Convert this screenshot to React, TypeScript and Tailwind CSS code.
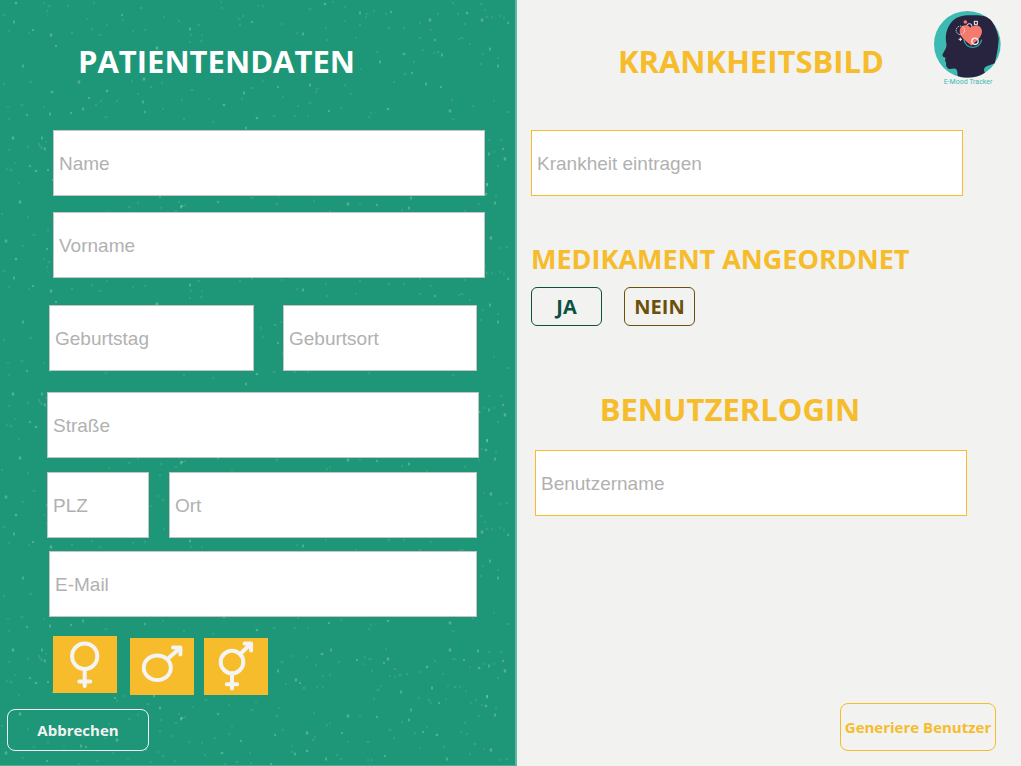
import React from "react";

type Speck = [number, number];

const brightSpecks: Speck[] = [
  [16, 3], [14, 22], [33, 30], [51, 35], [56, 46], [23, 66], [52, 92], [50, 114], [71, 113], [79, 82],
  [89, 98], [83, 109], [107, 91], [143, 102], [145, 112], [144, 79], [122, 15], [190, 29], [224, 105],
  [244, 93], [252, 22], [157, 48], [27, 115], [303, 34], [325, 4], [360, 13], [391, 12], [430, 20],
  [435, 40], [442, 55], [467, 13], [490, 49], [508, 23], [482, 20], [278, 87], [310, 85], [388, 109],
  [426, 84], [441, 87], [450, 111], [329, 111], [498, 66], [404, 54], [380, 62], [412, 73],
  [13, 138], [30, 166], [42, 138], [36, 171], [45, 149], [48, 170], [20, 202], [53, 180], [154, 184],
  [182, 206], [181, 207], [218, 202], [117, 228], [86, 235], [81, 234], [222, 241], [146, 237], [47, 249],
  [6, 241], [241, 229], [246, 128], [257, 118], [160, 196], [115, 186],
  [296, 168], [300, 171], [278, 159], [322, 142], [331, 138], [357, 148], [388, 147], [384, 151],
  [401, 180], [427, 155], [432, 176], [439, 191], [450, 138], [464, 148], [478, 139], [479, 156],
  [489, 154], [503, 149], [505, 159], [487, 184], [487, 185], [486, 194], [495, 203], [275, 223],
  [307, 221], [342, 221], [409, 208], [437, 223], [447, 247], [423, 220], [491, 238], [385, 244],
  [326, 247], [307, 239], [295, 242], [271, 252], [348, 204], [377, 205], [411, 198],
];

const softSpecks: Speck[] = [
  [4, 15], [9, 31], [29, 33], [44, 3], [49, 6], [47, 11], [48, 16], [68, 6], [72, 33], [87, 19],
  [92, 29], [94, 3], [100, 35], [107, 25], [123, 20], [133, 31], [141, 8], [145, 30], [164, 17],
  [179, 21], [199, 25], [202, 35], [221, 2], [222, 8], [239, 19], [240, 25], [243, 16], [258, 6],
  [31, 82], [4, 84], [8, 107], [9, 119], [22, 105], [44, 107], [96, 105], [101, 101], [106, 117],
  [117, 101], [132, 81], [138, 94], [151, 87], [162, 83], [163, 109], [182, 100], [192, 90],
  [209, 99], [184, 119], [213, 122], [252, 88], [242, 99], [191, 35], [190, 42], [201, 41],
  [263, 6], [282, 24], [297, 33], [310, 9], [333, 2], [345, 7], [360, 25], [367, 14], [374, 11],
  [366, 17], [386, 14], [389, 28], [404, 28], [356, 38], [326, 28], [327, 40], [345, 21], [420, 23],
  [431, 30], [420, 38], [438, 14], [458, 14], [459, 39], [462, 38], [465, 24], [470, 44], [485, 10],
  [487, 17], [500, 16], [504, 18], [492, 17], [481, 4], [453, 3], [423, 50], [434, 53], [438, 52],
  [377, 52], [361, 69], [414, 62], [405, 74], [394, 82], [345, 85], [316, 92], [317, 89], [351, 94],
  [283, 97], [298, 106], [310, 103], [341, 108], [308, 116], [295, 116], [274, 116], [376, 112],
  [371, 113], [369, 117], [453, 119], [452, 100], [473, 106], [494, 101], [508, 112], [481, 64],
  [498, 58], [483, 54], [275, 69], [281, 66], [261, 72], [263, 81],
  [9, 150], [28, 147], [39, 144], [46, 142], [42, 148], [40, 146], [15, 163], [7, 169], [11, 170],
  [2, 214], [19, 183], [28, 217], [54, 219], [74, 219], [105, 226], [109, 212], [129, 207],
  [117, 189], [124, 184], [138, 203], [148, 192], [161, 208], [179, 202], [185, 205], [176, 211],
  [160, 219], [172, 224], [193, 195], [206, 188], [229, 193], [232, 214], [229, 222], [252, 198],
  [256, 190], [189, 230], [202, 231], [215, 226], [205, 243], [175, 249], [158, 240], [163, 244],
  [151, 250], [128, 247], [113, 241], [97, 249], [85, 224], [64, 238], [48, 230], [34, 235],
  [23, 246], [250, 241], [251, 251], [237, 250], [225, 252], [79, 252], [255, 144], [282, 150],
  [291, 144], [307, 145], [316, 153], [339, 150], [323, 164], [330, 163], [286, 172], [304, 176],
  [317, 175], [323, 175], [365, 145], [370, 147], [363, 152], [386, 137], [372, 159], [395, 157],
  [407, 162], [395, 165], [390, 164], [400, 163], [420, 160], [443, 162], [435, 149], [454, 147],
  [470, 155], [484, 152], [494, 152], [501, 140], [489, 140], [498, 166], [448, 174], [455, 175],
  [460, 175], [466, 179], [419, 186], [429, 188], [446, 187], [431, 191], [471, 191], [482, 193],
  [476, 188], [496, 196], [381, 174], [378, 178], [374, 187], [360, 204], [402, 210], [390, 218],
  [427, 215], [415, 221], [461, 220], [467, 222], [479, 204], [465, 211], [279, 196], [277, 204],
  [314, 201], [330, 211], [327, 213], [313, 228], [292, 234], [315, 225], [337, 243], [341, 247],
  [368, 248], [372, 248], [348, 230], [368, 230], [394, 226], [420, 236], [444, 235], [475, 232],
  [484, 237], [470, 242], [500, 248], [507, 247], [283, 218], [292, 240],
];

function SpeckledBackground() {
  return (
    <svg className="absolute inset-0 -z-10 h-full w-full" aria-hidden="true">
      <defs>
        <pattern id="specks" width="516" height="256" patternUnits="userSpaceOnUse">
          <g fill="#c9e3c8" fillOpacity="0.32">
            {brightSpecks.map(([x, y], i) => (
              <ellipse key={i} cx={x} cy={y} rx={i % 3 ? 1 : 1.4} ry={i % 2 ? 1.7 : 1.2} />
            ))}
          </g>
          <g fill="#b9dec8" fillOpacity="0.14">
            {softSpecks.map(([x, y], i) => (
              <ellipse key={i} cx={x} cy={y} rx={i % 4 ? 1 : 1.6} ry={i % 3 ? 1.3 : 1} />
            ))}
          </g>
        </pattern>
      </defs>
      <rect width="100%" height="100%" fill="url(#specks)" />
    </svg>
  );
}

function Logo() {
  return (
    <svg viewBox="0 0 228 252" className="h-[84px] w-[76px] shrink-0" role="img" aria-label="E-Mood Tracker">
      <circle cx="112" cy="115" r="100" fill="#3dbab2" />
      <path
        d="M83 210 C82 202 84 192 76 188 C65 186 57 194 51 184 C46 178 51 171 46 166 C43 162 50 158 44 154 C37 152 35 148 40 141 C46 130 51 124 49 112 C45 90 49 70 62 52 C76 32 98 28 122 28 C142 27 164 26 180 40 C194 54 202 76 206 98 C204 136 197 158 194 172 L172 180 C161 184 160 191 165 200 C140 216 110 218 83 210Z"
        fill="#28233f"
      />
      <path d="M102 101 C106 132 150 132 155 101" fill="none" stroke="#2f9fa0" strokeWidth="4" />
      <circle cx="118" cy="61" r="8" fill="none" stroke="#f5f0f2" strokeWidth="3" />
      <path
        d="M124 119 C110 107 89 94 89 76 C89 57 111 51 123 66 C133 51 155 57 156 76 C156 93 139 106 124 119Z"
        fill="#f37a6d"
      />
      <circle cx="91" cy="73" r="12.5" fill="none" stroke="#f5f0f2" strokeWidth="3" strokeDasharray="4 3" />
      <circle cx="106" cy="48" r="5.5" fill="#f37a6d" />
      <rect x="133" y="46" width="9" height="9" fill="#28233f" stroke="#f5f0f2" strokeWidth="3" />
      <circle cx="135" cy="106" r="9.5" fill="none" stroke="#f5f0f2" strokeWidth="4" />
      <path d="M91 95v10M86 100h10" stroke="#f5f0f2" strokeWidth="3" />
      <text x="114" y="234" textAnchor="middle" fill="#3dbab2" fontSize="21" fontWeight="400" fontFamily="Roboto, sans-serif">
        E-Mood Tracker
      </text>
    </svg>
  );
}

type FieldProps = { label: string; type?: string; accent?: boolean };

function Field({ label, type = "text", accent = false }: FieldProps) {
  return (
    <input
      type={type}
      aria-label={label}
      placeholder={label}
      className={
        "block h-[66px] w-full min-w-0 border bg-white px-[5px] pt-[2px] font-['Liberation_Sans',Arial,sans-serif] text-[19px] font-normal text-gray-800 outline-none placeholder:text-[#b1b1b1] " +
        (accent ? "border-[#f6bc2b]" : "border-[#c4c4c4]")
      }
    />
  );
}

function GenderButton({ label, children }: { label: string; children: React.ReactNode }) {
  return (
    <button type="button" aria-label={label} className="h-[57px] w-16 bg-[#f6bc2b]">
      <svg
        viewBox="0 0 64 57"
        className="h-full w-full"
        fill="none"
        stroke="#f4f4f2"
        strokeWidth="4"
        strokeLinecap="round"
        strokeLinejoin="round"
      >
        {children}
      </svg>
    </button>
  );
}

export default function App() {
  return (
    <form
      className="grid min-h-screen grid-cols-[517fr_504fr] bg-[#f2f2f0] font-['Open_Sans','Noto_Sans',sans-serif] font-bold"
      onSubmit={(e) => e.preventDefault()}
    >
      <section className="relative isolate flex flex-col border-r-2 border-b border-r-[#62b79e] border-b-[#4fae92] bg-[#1e9778]">
        <SpeckledBackground />
        <h1 className="flex h-[130px] items-center justify-center pr-[82px] pb-2 text-[31px] leading-10 text-white">
          PATIENTENDATEN
        </h1>
        <div className="flex flex-col gap-4 pr-[30px] pl-[53px]">
          <Field label="Name" />
          <Field label="Vorname" />
        </div>
        <div className="mt-[27px] grid grid-cols-[205fr_194fr] gap-[29px] pr-[38px] pl-[49px]">
          <Field label="Geburtstag" />
          <Field label="Geburtsort" />
        </div>
        <div className="mt-[21px] pr-9 pl-[47px]">
          <Field label="Straße" />
        </div>
        <div className="mt-[14px] grid grid-cols-[102fr_308fr] gap-5 pr-[38px] pl-[47px]">
          <Field label="PLZ" />
          <Field label="Ort" />
        </div>
        <div className="mt-[13px] pr-[38px] pl-[49px]">
          <Field label="E-Mail" type="email" />
        </div>
        <div className="mt-[19px] flex pl-[53px]">
          <GenderButton label="Weiblich">
            <ellipse cx="31.7" cy="20.2" rx="12.6" ry="12.8" />
            <path d="M31.7 33v17M26.3 45.6h11" />
          </GenderButton>
          <div className="mt-[2px] ml-[13px] flex gap-[10px]">
            <GenderButton label="Männlich">
              <ellipse cx="27.3" cy="29.7" rx="13.5" ry="12.3" />
              <path d="M37.5 21L50 10M43 9.6h7.4v7" />
            </GenderButton>
            <GenderButton label="Divers">
              <circle cx="28" cy="24" r="11.3" />
              <path d="M28 35.5v15M22.8 46.3h10.4M36.5 15.8L46.8 5.8M40.5 5.5h6.6v7" />
            </GenderButton>
          </div>
        </div>
        <div className="mt-auto pb-[14px] pl-[7px]">
          <button
            type="button"
            className="h-[42px] w-[142px] rounded-lg border border-[#f2f2f0] text-[15px] text-[#f2f2f0]"
          >
            Abbrechen
          </button>
        </div>
      </section>

      <section className="flex flex-col text-[#f6bc2b]">
        <div className="flex h-[130px] pr-[15px] pl-[55px]">
          <h2 className="flex flex-1 items-center justify-center pb-2 text-[31px] leading-10">KRANKHEITSBILD</h2>
          <div className="pt-[6px]">
            <Logo />
          </div>
        </div>
        <div className="pr-[58px] pl-[14px]">
          <Field label="Krankheit eintragen" accent />
          <h3 className="mt-[43px] text-[27px] leading-10 whitespace-nowrap">MEDIKAMENT ANGEORDNET</h3>
          <div className="mt-2 flex gap-[22px] text-xl">
            <button type="button" className="h-[39px] w-[71px] rounded-md border border-[#0b5142] text-[#0b5142]">
              JA
            </button>
            <button type="button" className="h-[39px] w-[71px] rounded-md border border-[#6b500a] text-[#6b500a]">
              NEIN
            </button>
          </div>
        </div>
        <h2 className="mt-[63px] pr-[78px] text-center text-[31px] leading-10">BENUTZERLOGIN</h2>
        <div className="mt-[21px] pr-[54px] pl-[18px]">
          <Field label="Benutzername" accent />
        </div>
        <div className="mt-auto flex justify-end pr-[25px] pb-[15px]">
          <button
            type="submit"
            className="h-12 w-[156px] rounded-lg border border-[#f6bc2b] text-[15px] whitespace-nowrap"
          >
            Generiere Benutzer
          </button>
        </div>
      </section>
    </form>
  );
}
